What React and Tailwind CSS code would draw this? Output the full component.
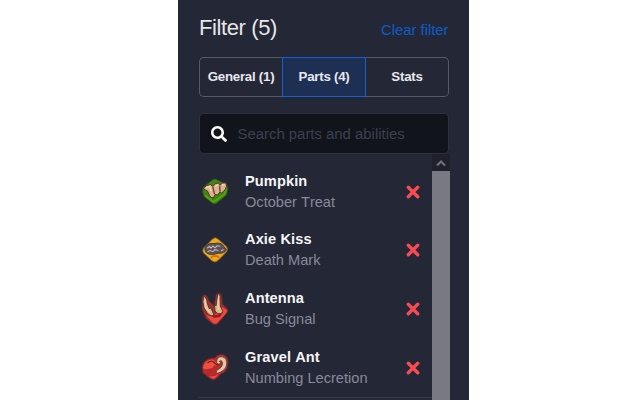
import React from "react";
import { FaSearch } from "react-icons/fa";

function PumpkinIcon() {
  return (
    <svg viewBox="0 0 28 30" className="h-[30px] w-7">
      <path d="M2 10.5 L11 3.2 Q14 1 16.5 3 L25.5 7.5 Q27.5 10 26.5 14 L25.5 18 L15.5 26.3 Q13 27.8 10.5 25.5 L3 19.5 Q.8 15 2 10.5Z" fill="#3e8610" stroke="#2e501d" strokeWidth=".8" />
      <path d="M4 18.5 L12.5 25 L23.5 17 L25.5 11" fill="none" stroke="#51a70b" strokeWidth="1.7" />
      <path d="M2.3 12 Q4 8 9.5 7.5 L12 9.5 Q14 5.5 17.5 6 L19 8 Q21 5 25 6 Q26.5 9 24 13 L20.5 16 L19 14.5 L17 18 L14 17.5 L12.5 21 Q9.5 21 8.5 18.5 L6.5 14Z" fill="#dcb391" stroke="#493822" strokeWidth="1" />
      <path d="M11.8 10 L13.5 17 M18.6 8.6 L19 14" fill="none" stroke="#684731" strokeWidth="1.4" />
      <path d="M5 10.5 L8.7 9.6 L10.2 14 M14.2 9.3 L16.5 8.2 M21 8 L23.6 7.8" fill="none" stroke="#f4d7b9" strokeWidth="1.4" />
    </svg>
  );
}

function KissIcon() {
  return (
    <svg viewBox="0 0 28 30" className="h-[30px] w-7">
      <path d="M11.5 4 Q14.5 1.5 17 4 L25.5 11.5 Q27.5 14 25.5 17 L17 25.5 Q14 28.5 10.5 25.5 L2.5 18 Q1 16 2.5 13Z" fill="#eeaa16" stroke="#76582a" strokeWidth=".8" />
      <path d="M4.3 11.2 Q8 7.5 13 8.5 Q20 6.8 22.5 11 L25.4 14.7 Q23.5 18.8 17 18.2 Q10 20.7 6 18.2 Q3 16 4.3 11.2Z" fill="#5c515a" stroke="#493f40" strokeWidth="1" />
      <path d="M6 13.2 L8.5 11.5 L10 13 L12 11 L14 12.8 L16 10.8 L19.3 11.2 M6.5 16.7 L9 15.5 L12 16.7 L14 14.7 L17.3 15.5 M20 16 L22.5 14.5" fill="none" stroke="#c5b7b2" strokeWidth="1.1" />
      <path d="M10 23 Q12 20 14 21.2 Q16.5 20.2 18 23" fill="none" stroke="#d16a17" strokeWidth="1.6" />
    </svg>
  );
}

function AntennaIcon() {
  return (
    <svg viewBox="0 0 28 34" className="h-[34px] w-7">
      <path d="M1 5 Q3 1 6 4 L8 9 L13 14 L15 3 Q18 -1 20.5 3 L21.5 12 L26.5 17 Q28 20 25 22 L17 31.5 Q14 34 11 31.5 L5 26.5 L1 17Z" fill="#a32d2e" stroke="#5d2b30" strokeWidth=".8" />
      <path d="M5 23 L12 25 L21 15 L26.3 18.5 L24.5 22 L16 31 Q14 32.5 11.5 30.5Z" fill="#ed4b3b" />
      <path d="M9.5 22 Q15 25 22 20 L19 25 L13 26Z" fill="#9e171e" />
      <path d="M2.8 4.5 Q5.2 4 6.5 12 L8.5 17 L9.8 15.5 L13 23 Q10.5 25 7 22 L3 16 Q1 9 2.8 4.5Z M16.8 2 Q19.5 1.5 19 6 L19.4 14 L22 20 Q17.5 24 14 19 L13.4 12 L15 14Z" fill="#ddb58d" stroke="#493127" strokeWidth=".9" />
      <path d="M3.8 7 L5 15 L8.5 20 M17.7 4 L17 13 L17.7 18" fill="none" stroke="#f1d4ae" strokeWidth="1.1" />
    </svg>
  );
}

function GravelIcon() {
  return (
    <svg viewBox="0 0 28 30" className="h-[30px] w-7">
      <path d="M3 9 Q7 4.5 14 5 Q16 .8 22 1.5 Q28 3.5 27 11.5 Q26 19 20 21 L15 26 Q12 28 8.5 25 L2 20 Q-.5 14 3 9Z" fill="#ba2929" stroke="#60292e" strokeWidth=".9" />
      <path d="M1.8 15 Q3.5 6.5 12 6.5 L18 12 Q12 11.5 11.5 15 L4.5 16.5Z M8 23 Q13 25 18 20 L14 25 Q11 27 8 23Z" fill="#ed5041" />
      <path d="M6.5 10 Q11 6 14 10.5 Q16 12 18.3 11.5" fill="none" stroke="#742529" strokeWidth="1.4" />
      <path d="M15.7 9.5 Q15.2 3.8 21 3.6 Q26.5 5 25.7 12 Q24.3 18 16.5 20.3 Q14 19.5 16 17 Q21.5 15 21.5 9.7 Q20.5 6.5 18.5 8.2 Q18.3 9 20 9.5 Q18.2 13 15.7 9.5Z" fill="#e3c5a4" stroke="#653b34" strokeWidth=".9" />
    </svg>
  );
}

const parts = [
  { name: "Pumpkin", ability: "October Treat", Icon: PumpkinIcon },
  { name: "Axie Kiss", ability: "Death Mark", Icon: KissIcon },
  { name: "Antenna", ability: "Bug Signal", Icon: AntennaIcon },
  { name: "Gravel Ant", ability: "Numbing Lecretion", Icon: GravelIcon },
];

function PartRow({ name, ability, Icon }) {
  return (
    <li className="flex h-[58.6px] shrink-0 items-center">
      <div className="flex w-[46px] items-center pl-[2px]">
        <Icon />
      </div>
      <div className="flex-1 whitespace-nowrap text-[14.6px] leading-[21px]">
        <div className="font-bold tracking-[0.1px] text-[#f5f5f7]">{name}</div>
        <div className="text-[#888a9b]">{ability}</div>
      </div>
      <svg viewBox="0 0 14 14" className="mr-[12.5px] size-3.5" fill="none" stroke="#f74b54" strokeWidth="3.4" strokeLinecap="round">
        <path d="M2.3 2.3 11.7 11.7M11.7 2.3 2.3 11.7" />
      </svg>
    </li>
  );
}

export default function App() {
  return (
    <main className="flex h-[400px] w-[640px] overflow-hidden bg-white pl-[178px] font-['Liberation_Sans',Arial,sans-serif] [font-kerning:none]">
      <section className="flex w-[291px] flex-col overflow-hidden bg-[#242735] pl-[21px]">
        <header className="flex h-[57px] w-[249.5px] shrink-0 items-start justify-between whitespace-nowrap">
          <h1 className="pt-[13.5px] text-[22px] leading-7 tracking-[-0.4px] text-[#e6e6e9]">Filter (5)</h1>
          <button className="pt-[19.5px] text-[14.8px] leading-5 text-[#0c5dcc]">Clear filter</button>
        </header>
        <nav className="flex h-10 w-[250px] shrink-0 text-[13.3px] font-bold tracking-[-0.25px] text-[#e8e8ed]">
          <button className="w-[83px] whitespace-nowrap rounded-l-[5px] border border-r-0 border-[#565968]">General (1)</button>
          <button className="w-[84px] whitespace-nowrap border border-[#1260d0] bg-[#1d2f52]">Parts (4)</button>
          <button className="w-[83px] rounded-r-[5px] border border-l-0 border-[#565968]">Stats</button>
        </nav>
        <div className="mt-4 flex h-[41px] w-[250px] shrink-0 items-center rounded-[5px] border border-[#2d303e] bg-[#11141b] pl-[11px]">
          <FaSearch className="size-4 text-white" />
          <span className="ml-[10.5px] whitespace-nowrap pt-px text-[14.9px] text-[#3d404e]">Search parts and abilities</span>
        </div>
        <div className="flex h-[246px] w-[251px]">
          <ul className="flex w-[233px] flex-col pt-[8.5px]">
            {parts.map((part) => (
              <PartRow key={part.name} {...part} />
            ))}
            <li className="h-px shrink-0 bg-[#393b4b]" />
          </ul>
          <div className="flex w-[18px] flex-col bg-[#797981]">
            <div className="flex h-[17px] items-center justify-center bg-[#20202a]">
              <svg viewBox="0 0 10 8" className="h-2 w-2.5" fill="none" stroke="#70707a" strokeWidth="2">
                <path d="m1 6.5 4-4 4 4" />
              </svg>
            </div>
          </div>
        </div>
      </section>
    </main>
  );
}
